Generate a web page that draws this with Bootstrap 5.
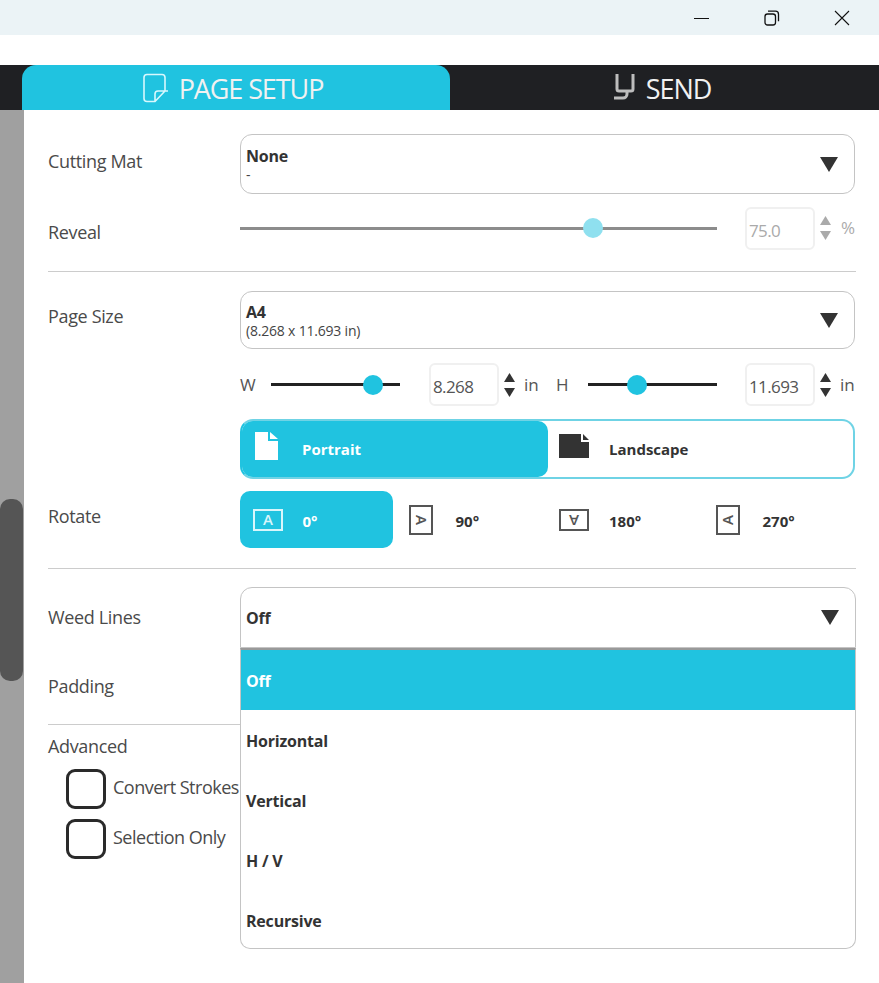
<!DOCTYPE html>
<html lang="en">
<head>
    <meta charset="UTF-8">
    <title>Page Setup</title>
    <link href="https://cdn.jsdelivr.net/npm/bootstrap@5.3.0/dist/css/bootstrap.min.css" rel="stylesheet">
    <style>
        body { font-family: "Open Sans", "Noto Sans", sans-serif; font-size: 18px; color: #4a4a4a; background: #fff; height: 983px; overflow: hidden; }
        .title-bar { height: 35px; background: #ebf3f6; padding-right: 29px; gap: 54px; }
        .title-bar svg { display: block; }
        .tab-bar { margin-top: 30px; height: 45px; background: #1f2023; padding-left: 22px; }
        .tab-item { height: 45px; font-size: 27px; color: #f1f1f1; gap: 11px; letter-spacing: -1.100px; padding-right: 7px; }
        .tab-item span { padding-top: 4px; }
        .tab-page { width: 428px; background: #20c3e0; border-radius: 14px 14px 0 0; }
        .tab-send { width: 429px; gap: 9px; padding-right: 5px; }
        .side-track { width: 24px; height: 873px; background: #a0a0a0; padding-top: 389px; flex: none; }
        .side-thumb { width: 23px; height: 182px; background: #555; border-radius: 10px; }
        .panel { flex: 1; padding: 24px 23px 0 24px; position: relative; letter-spacing: -.35px; }
        .lbl { width: 192px; flex: none; }
        .lbl-up { margin-bottom: 6px; }
        .lbl-high { margin-bottom: 8px; }
        .pick-box { height: 60px; width: 615px; flex: none; border: 1px solid #c4c4c4; border-radius: 12px; padding: 0 16px 0 5px; background: #fff; font-size: 16px; line-height: 18px; color: #333; text-align: left; }
        .pick-box b { display: block; font-weight: 700; letter-spacing: -.2px; }
        .pick-box small { display: block; font-size: 14px; line-height: 15px; margin-top: 2px; letter-spacing: -.2px; color: #444; }
        .pick-short { height: 58px; }
        .pick-open { height: 61px; width: 616px; border-radius: 12px 12px 0 0; }
        .row-reveal { height: 77px; }
        .reveal-ctl { margin-bottom: 9px; width: 616px; }
        .divider { height: 1px; margin: 0; background: #ccc; opacity: 1; border: 0; }
        .size-row { margin-top: 19px; }
        .form-range { height: 20px; padding: 0; }
        .form-range::-webkit-slider-runnable-track { height: 3px; background: #222; border-radius: 0; }
        .form-range::-webkit-slider-thumb { width: 20px; height: 20px; margin-top: -8.500px; background: #20c3e0; border-radius: 50%; }
        .form-range.track-grey:disabled::-webkit-slider-runnable-track { background: #8c8c8c; }
        .form-range.track-grey:disabled::-webkit-slider-thumb { background: #8fe0ef; }
        .slide-long { width: 477px; }
        .slide-short { width: 129px; flex: none; }
        .num-box { width: 70px; height: 43px; flex: none; border: 2px solid #f0f0f0; border-radius: 6px; padding: 4px 0 0 2px; font-size: 17px; letter-spacing: -.6px; color: #555; }
        .num-box:disabled { background: #fff; color: #aaa; }
        .spin { width: 11px; gap: 6px; margin-left: 5px; flex: none; }
        .spin svg { display: block; }
        .unit { font-size: 17px; color: #555; letter-spacing: 0; }
        .unit-dim { color: #aaa; margin-left: 10px; }
        .axis-w { width: 31px; flex: none; font-size: 17px; color: #555; letter-spacing: 0; }
        .axis-h { width: 32px; flex: none; font-size: 17px; color: #555; margin-left: 18px; letter-spacing: 0; }
        .unit-in { width: 14px; margin-left: 9px; flex: none; }
        .gap-num { margin-left: 29px; }
        .gap-num-h { margin-left: 28px; }
        .dims-row { margin: 14px 0 0 192px; height: 43px; }
        .seg { height: 60px; border: 2px solid #6fd3e5; border-left-color: #20c3e0; border-radius: 13px; width: 615px; margin: 13px 0 0 192px; font-size: 15px; font-weight: 700; letter-spacing: 0; overflow: hidden; }
        .seg-cell { height: 100%; gap: 20px; }
        .seg-cell svg { margin-bottom: 6px; flex: none; }
        .seg-on { background: #20c3e0; color: #fff; border-radius: 0 10px 10px 0; width: 306px; padding-left: 10px; }
        .seg-off { color: #333; flex: 1; padding-left: 11px; }
        .rot-row { margin-top: 12px; }
        .rot-cell { width: 153.500px; height: 57px; font-size: 15px; font-weight: 700; color: #333; padding-left: 12.500px; gap: 20px; flex: none; letter-spacing: 0; }
        .rot-on { width: 153px; background: #20c3e0; color: #fff; border-radius: 10px; }
        .rot-cell svg text { font-family: "Open Sans", sans-serif; font-size: 15px; font-weight: 600; fill: #555; }
        .rot-on svg text { fill: #d8f6fb; }
        .rot-cell span { padding-top: 3px; }
        .sec-rule { margin-top: 20px; }
        .weed-row { margin-top: 18px; }
        .pad-row { height: 76px; }
        .adv-rule { margin-bottom: 8px; }
        .chk-list { margin-top: 9px; }
        .chk { width: 40px; height: 40px; border: 3px solid #2a2a2a; border-radius: 9px; flex: none; }
        .chk-row { padding-left: 18px; gap: 7px; letter-spacing: -.5px; height: 40px; margin-bottom: 10px; }
        .chk-row span { margin-bottom: 4px; }
        .weed-menu { position: absolute; left: 216px; top: 538px; width: 616px; height: 301px; min-width: 0; padding: 0; margin: 0; border: 1px solid #c4c4c4; border-top: 2px solid #999; border-radius: 0 0 10px 10px; display: block; font-size: 16px; overflow: hidden; }
        .weed-menu .dropdown-item { height: 60px; padding: 1px 5px 0; display: flex; align-items: center; font-weight: 700; letter-spacing: -.2px; color: #333; }
        .weed-menu .dropdown-item.active { background: #20c3e0; color: #fff; }
    </style>
</head>
<body>

    <div class="title-bar d-flex justify-content-end align-items-center">
        <svg width="16" height="16" viewBox="0 0 16 16"><path d="M0 8.500h15" stroke="#111" fill="none"/></svg>
        <svg width="16" height="16" viewBox="0 0 16 16"><rect x="1" y="4" width="10.500" height="11" rx="2.500" stroke="#111" stroke-width="1.300" fill="none"/><path d="M4 1.200h7.500a3 3 0 0 1 3 3v7" stroke="#111" stroke-width="1.300" fill="none"/></svg>
        <svg width="16" height="16" viewBox="0 0 16 16"><path d="M1 1l14 14M15 1L1 15" stroke="#111" stroke-width="1.100" fill="none"/></svg>
    </div>

    <div class="tab-bar d-flex">
        <div class="tab-item tab-page d-flex align-items-center justify-content-center">
            <svg width="26" height="30" viewBox="0 0 26 30"><path d="M5 1.500h15a3 3 0 0 1 3 3V18L13 28.500H5a3 3 0 0 1-3-3v-21a3 3 0 0 1 3-3zM13 28.500V21a3 3 0 0 1 3-3h10" stroke="#d8f8fd" stroke-width="1.600" fill="none"/></svg>
            <span>PAGE SETUP</span>
        </div>
        <div class="tab-item tab-send d-flex align-items-center justify-content-center">
            <svg width="24" height="30" viewBox="0 0 24 30"><path d="M4 1v15a2 2 0 0 0 2 2h12a2 2 0 0 0 2-2V1" stroke="#bdbdbd" stroke-width="3" fill="none"/><path d="M14 19v2a4 4 0 0 1-4 4H1" stroke="#bdbdbd" stroke-width="3" fill="none"/></svg>
            <span>SEND</span>
        </div>
    </div>

    <div class="d-flex">
        <div class="side-track"><div class="side-thumb"></div></div>
        <div class="panel">
            <div class="d-flex align-items-center">
                <div class="lbl lbl-up">Cutting Mat</div>
                <button class="pick-box d-flex align-items-center justify-content-between">
                    <div><b>None</b><small>-</small></div>
                    <svg width="18" height="15" viewBox="0 0 18 15"><path d="M0 0h18L9 15z" fill="#333"/></svg>
                </button>
            </div>
            <div class="d-flex align-items-center row-reveal">
                <div class="lbl">Reveal</div>
                <div class="d-flex align-items-center reveal-ctl">
                    <input type="range" class="form-range track-grey slide-long" value="75" disabled>
                    <input class="form-control num-box gap-num-h" value="75.0" disabled>
                    <div class="spin d-flex flex-column"><svg width="11" height="9" viewBox="0 0 11 9"><path d="M5.500 0L11 9H0z" fill="#aaa"/></svg><svg width="11" height="9" viewBox="0 0 11 9"><path d="M0 0h11L5.500 9z" fill="#aaa"/></svg></div>
                    <div class="unit unit-dim">%</div>
                </div>
            </div>
            <hr class="divider">

            <div class="d-flex align-items-center size-row">
                <div class="lbl lbl-high">Page Size</div>
                <button class="pick-box pick-short d-flex align-items-center justify-content-between">
                    <div><b>A4</b><small>(8.268 x 11.693 in)</small></div>
                    <svg width="18" height="15" viewBox="0 0 18 15"><path d="M0 0h18L9 15z" fill="#333"/></svg>
                </button>
            </div>
            <div class="d-flex align-items-center dims-row">
                <div class="axis-w">W</div>
                <input type="range" class="form-range slide-short" value="84">
                <input class="form-control num-box gap-num" value="8.268">
                <div class="spin d-flex flex-column"><svg width="11" height="9" viewBox="0 0 11 9"><path d="M5.500 0L11 9H0z" fill="#333"/></svg><svg width="11" height="9" viewBox="0 0 11 9"><path d="M0 0h11L5.500 9z" fill="#333"/></svg></div>
                <div class="unit unit-in">in</div>
                <div class="axis-h">H</div>
                <input type="range" class="form-range slide-short" value="36">
                <input class="form-control num-box gap-num-h" value="11.693">
                <div class="spin d-flex flex-column"><svg width="11" height="9" viewBox="0 0 11 9"><path d="M5.500 0L11 9H0z" fill="#333"/></svg><svg width="11" height="9" viewBox="0 0 11 9"><path d="M0 0h11L5.500 9z" fill="#333"/></svg></div>
                <div class="unit unit-in">in</div>
            </div>
            <div class="seg d-flex">
                <div class="seg-cell seg-on d-flex align-items-center">
                    <svg width="30" height="28" viewBox="0 0 30 28"><path d="M3 0h13v9h10v19H3zM18 0l8 7h-8z" fill="#fff"/></svg>
                    <span>Portrait</span>
                </div>
                <div class="seg-cell seg-off d-flex align-items-center">
                    <svg width="30" height="24" viewBox="0 0 30 24"><path d="M0 0h22v8h8v16H0zM24 0l6 6h-6z" fill="#333"/></svg>
                    <span>Landscape</span>
                </div>
            </div>
            <div class="d-flex align-items-center rot-row">
                <div class="lbl lbl-up">Rotate</div>
                <div class="rot-cell rot-on d-flex align-items-center">
                    <svg width="30" height="22" viewBox="0 0 30 22"><rect x="1" y="1" width="28" height="20" fill="none" stroke="#d8f6fb" stroke-width="2"/><text x="15" y="16" text-anchor="middle">A</text></svg>
                    <span>0°</span>
                </div>
                <div class="rot-cell d-flex align-items-center">
                    <svg width="30" height="30" viewBox="0 0 30 30"><rect x="4" y="1" width="22" height="28" fill="none" stroke="#555" stroke-width="2"/><text x="15" y="15" text-anchor="middle" transform="rotate(90 15 15) translate(0 5)">A</text></svg>
                    <span>90°</span>
                </div>
                <div class="rot-cell d-flex align-items-center">
                    <svg width="30" height="22" viewBox="0 0 30 22"><rect x="1" y="1" width="28" height="20" fill="none" stroke="#555" stroke-width="2"/><text x="15" y="11" text-anchor="middle" transform="rotate(180 15 11) translate(0 5)">A</text></svg>
                    <span>180°</span>
                </div>
                <div class="rot-cell d-flex align-items-center">
                    <svg width="30" height="30" viewBox="0 0 30 30"><rect x="4" y="1" width="22" height="28" fill="none" stroke="#555" stroke-width="2"/><text x="15" y="15" text-anchor="middle" transform="rotate(270 15 15) translate(0 5)">A</text></svg>
                    <span>270°</span>
                </div>
            </div>
            <hr class="divider sec-rule">

            <div class="d-flex align-items-center weed-row">
                <div class="lbl">Weed Lines</div>
                <button class="pick-box pick-open d-flex align-items-center justify-content-between">
                    <b>Off</b>
                    <svg width="18" height="15" viewBox="0 0 18 15"><path d="M0 0h18L9 15z" fill="#333"/></svg>
                </button>
            </div>
            <div class="d-flex align-items-center pad-row">
                <div class="lbl">Padding</div>
            </div>
            <hr class="divider adv-rule">
            <div>Advanced</div>
            <div class="chk-list">
                <div class="chk-row d-flex align-items-center"><div class="chk"></div><span>Convert Strokes</span></div>
                <div class="chk-row d-flex align-items-center"><div class="chk"></div><span>Selection Only</span></div>
            </div>

            <ul class="dropdown-menu show weed-menu list-unstyled">
                <li><a class="dropdown-item active" href="#">Off</a></li>
                <li><a class="dropdown-item" href="#">Horizontal</a></li>
                <li><a class="dropdown-item" href="#">Vertical</a></li>
                <li><a class="dropdown-item" href="#">H / V</a></li>
                <li><a class="dropdown-item" href="#">Recursive</a></li>
            </ul>
        </div>
    </div>

    <script src="https://cdn.jsdelivr.net/npm/bootstrap@5.3.0/dist/js/bootstrap.bundle.min.js"></script>
</body>
</html>
